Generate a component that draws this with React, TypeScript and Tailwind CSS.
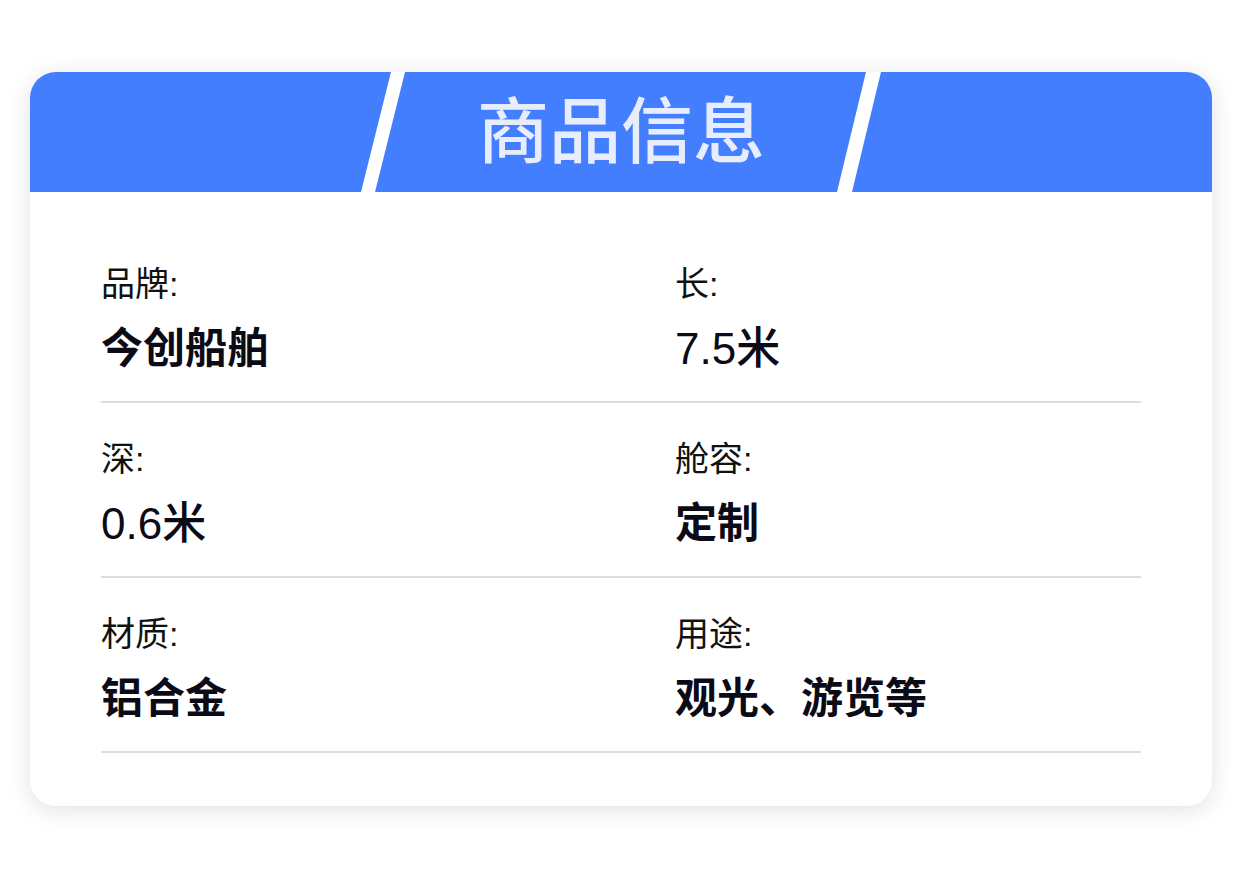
const rows: [string, string, string, string][] = [
  ["品牌:", "今创船舶", "长:", "7.5米"],
  ["深:", "0.6米", "舱容:", "定制"],
  ["材质:", "铝合金", "用途:", "观光、游览等"],
];

function Cell({ label, value }: { label: string; value: string }) {
  // measurements ("7.5米") are set lighter than the word values
  const numeric = /^[0-9.]/.test(value);
  return (
    <div className="flex flex-col">
      <div className="text-[34px] leading-[36px] text-[#111]">{label}</div>
      <div
        className={
          numeric
            ? "mt-[23px] text-[44px] leading-[48px] font-medium text-[#0b0b17]"
            : "mt-[23px] text-[42px] leading-[48px] font-semibold text-[#0b0b17]"
        }
      >
        {value}
      </div>
    </div>
  );
}

export default function App() {
  return (
    <div
      className="min-h-screen bg-white pt-[72px] pl-[30px]"
      style={{ fontFamily: '"Liberation Sans", "Noto Sans CJK SC", sans-serif' }}
    >
      <div className="w-[1182px] rounded-[26px] bg-white overflow-hidden shadow-[0_4px_24px_rgba(0,0,0,0.12)]">
        <div className="relative h-[120px] bg-[#437eff] flex items-center justify-center">
          <svg className="absolute inset-0" width="1182" height="120" viewBox="0 0 1182 120">
            <polygon points="361,0 375,0 345,120 331,120" fill="#fff" />
            <polygon points="836,0 851,0 822,120 807,120" fill="#fff" />
          </svg>
          <div className="relative text-[72px] leading-none font-medium text-[#e8edfd]">商品信息</div>
        </div>
        <div className="pt-[36px] pb-[53px] px-[71px]">
          {rows.map(([l1, v1, l2, v2]) => (
            <div key={l1} className="grid grid-cols-[574px_1fr] pt-[38px] pb-[28px] border-b-2 border-[#dcdce1]">
              <Cell label={l1} value={v1} />
              <Cell label={l2} value={v2} />
            </div>
          ))}
        </div>
      </div>
    </div>
  );
}
